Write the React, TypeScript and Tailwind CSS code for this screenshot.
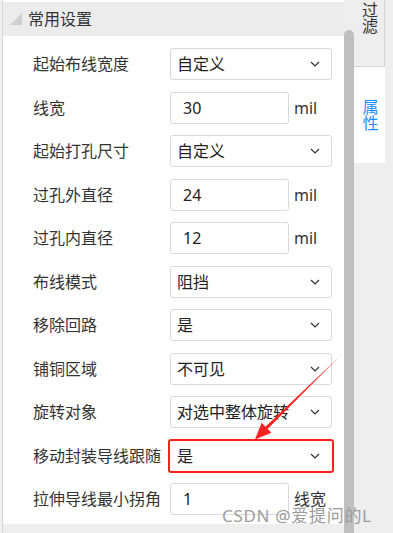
import type { ReactNode } from "react"

const font = { fontFamily: '"Noto Sans", "Noto Sans CJK SC", sans-serif' }

type Row =
    | { label: string; kind: "select"; value: string; hot?: boolean }
    | { label: string; kind: "input"; value: string; unit: string }

const rows: Row[] = [
    { label: "起始布线宽度", kind: "select", value: "自定义" },
    { label: "线宽", kind: "input", value: "30", unit: "mil" },
    { label: "起始打孔尺寸", kind: "select", value: "自定义" },
    { label: "过孔外直径", kind: "input", value: "24", unit: "mil" },
    { label: "过孔内直径", kind: "input", value: "12", unit: "mil" },
    { label: "布线模式", kind: "select", value: "阻挡" },
    { label: "移除回路", kind: "select", value: "是" },
    { label: "铺铜区域", kind: "select", value: "不可见" },
    { label: "旋转对象", kind: "select", value: "对选中整体旋转" },
    { label: "移动封装导线跟随", kind: "select", value: "是", hot: true },
    { label: "拉伸导线最小拐角", kind: "input", value: "1", unit: "线宽" },
]

function Chevron() {
    return (
        <svg width="10" height="6" viewBox="0 0 10 6" className="shrink-0">
            <polyline points="1,1 5,5 9,1" fill="none" stroke="#333" strokeWidth="1.2" />
        </svg>
    )
}

function Select({ value, hot }: { value: string; hot?: boolean }) {
    if (hot) {
        return (
            <div className="ml-[-2px] -my-px flex h-[34px] w-[166px] items-center justify-between rounded-[3px] border-2 border-[#ff1f1f] bg-white pl-[7px] pr-[12px] text-[16px] text-[#222]">
                <span>{value}</span>
                <Chevron />
            </div>
        )
    }
    return (
        <div className="flex h-[32px] w-[162px] items-center justify-between rounded-[3px] border border-[#d9d9d9] bg-white pl-[6px] pr-[11px] text-[16px] text-[#222]">
            <span>{value}</span>
            <Chevron />
        </div>
    )
}

function Field({ value, unit }: { value: string; unit: string }) {
    return (
        <div className="flex items-center">
            <div className="flex h-[32px] w-[119px] items-center rounded-[3px] border border-[#d9d9d9] bg-white pl-[12px] text-[16px] text-[#222]">
                {value}
            </div>
            <span className="ml-[5px] text-[16px] text-[#333]">{unit}</span>
        </div>
    )
}

function Tab({ children, active }: { children: ReactNode; active?: boolean }) {
    return (
        <div
            className={`flex w-[31px] flex-col items-center text-[16px] ${active ? "h-[96px] justify-center bg-white text-[#1890ff]" : "h-[67px] border-b border-r border-[#d4d4d4] bg-[#eeeeee] pt-[2px] text-[#333]"
                }`}
        >
            <span className="leading-[16px] [writing-mode:vertical-rl]">{children}</span>
        </div>
    )
}

export default function App() {
    return (
        <div className="relative flex h-[533px] w-[393px] overflow-hidden bg-[#eeeeee]" style={font}>
            {/* left edge */}
            <div className="w-[3px] border-r border-[#d6d6d6] bg-[#f0f0f0]" />

            {/* panel */}
            <div className="flex w-[341px] flex-col">
                <div className="h-[2px] bg-white" />
                <div className="flex h-[34px] items-center bg-[#ececec] pl-[7px]">
                    <svg width="12" height="12" viewBox="0 0 12 12" className="mr-[6px]">
                        <polygon points="12,0 12,12 0,12" fill="#cfcfcf" />
                    </svg>
                    <span className="text-[16px] text-[#333]">常用设置</span>
                </div>
                <div className="flex h-[488px] flex-col gap-[11.5px] bg-white pl-[30px] pt-[12px]">
                    {rows.map((r) => (
                        <div key={r.label} className="flex h-[32px] items-center">
                            <span className="w-[137px] shrink-0 text-[16px] text-[#333]">{r.label}</span>
                            {r.kind === "select" ? <Select value={r.value} hot={r.hot} /> : <Field value={r.value} unit={r.unit} />}
                        </div>
                    ))}
                </div>
            </div>

            {/* scrollbar */}
            <div className="flex w-[10px] flex-col pt-[30px]">
                <div className="flex-1 rounded-t-full bg-[#bfbfbf]" />
            </div>

            {/* side tabs */}
            <div className="flex w-[39px] flex-col">
                <Tab>过滤</Tab>
                <Tab active>属性</Tab>
            </div>

            {/* annotation arrow */}
            <svg className="pointer-events-none absolute left-0 top-0" width="393" height="533">
                <polygon points="341.2,354.8 340.8,355.2 265.4,426.7 267.6,428.9" fill="#f22" />
                <polygon points="255,439.5 261.6,422.8 271.4,432.8" fill="#f22" />
            </svg>

            <span className="absolute left-[222px] top-[503px] text-[17px] tracking-[0.7px] text-[#9c9c9c]">
                CSDN @爱提问的L
            </span>
        </div>
    )
}
